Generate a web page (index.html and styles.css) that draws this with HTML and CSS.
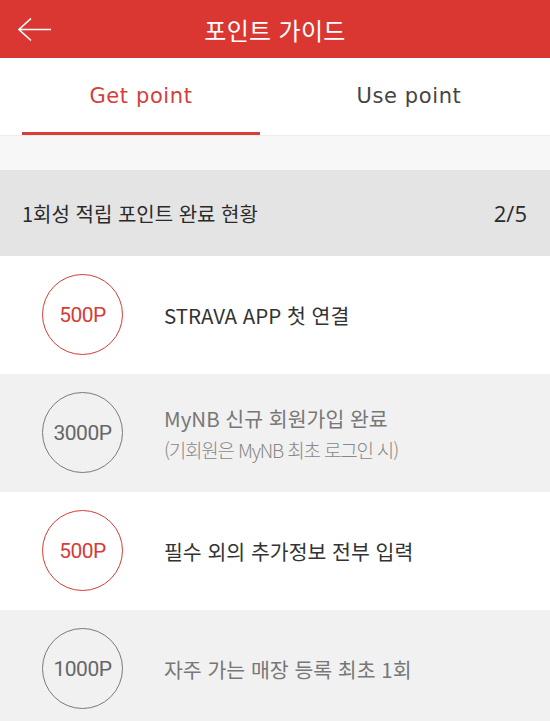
FILE: index.html
```html
<!DOCTYPE html>
<html lang="ko">
<head>
    <meta charset="UTF-8">
    <meta name="viewport" content="width=device-width, initial-scale=1.0">
    <title>포인트 가이드</title>
    <link rel="stylesheet" href="styles.css">
</head>
<body>
    <header class="topbar">
        <a class="back" href="#">
            <svg width="34" height="24" viewBox="0 0 34 24">
                <path d="M1 11.5 H33 M13 0.5 L1 11.5 L13 22.5" fill="none" stroke="#fff" stroke-width="1.6"/>
            </svg>
        </a>
        <h1>포인트 가이드</h1>
        <span></span>
    </header>

    <nav class="tabs">
        <a class="tab active" href="#">Get point</a>
        <a class="tab" href="#">Use point</a>
    </nav>

    <div class="spacer"></div>

    <div class="summary">
        <span>1회성 적립 포인트 완료 현황</span>
        <span class="count">2/5</span>
    </div>

    <ul class="list">
        <li class="item done">
            <div class="badge">500P</div>
            <div class="desc">
                <p class="title">STRAVA APP 첫 연결</p>
            </div>
        </li>
        <li class="item">
            <div class="badge">3000P</div>
            <div class="desc">
                <p class="title">MyNB 신규 회원가입 완료</p>
                <p class="note">(기회원은 MyNB 최초 로그인 시)</p>
            </div>
        </li>
        <li class="item done">
            <div class="badge">500P</div>
            <div class="desc">
                <p class="title">필수 외의 추가정보 전부 입력</p>
            </div>
        </li>
        <li class="item">
            <div class="badge">1000P</div>
            <div class="desc">
                <p class="title">자주 가는 매장 등록 최초 1회</p>
            </div>
        </li>
    </ul>
</body>
</html>
```

FILE: styles.css
```css
body {
    margin: 0;
    font-family: "Noto Sans CJK KR", "Noto Sans", sans-serif;
    color: #333;
    background-color: #fff;
}

.topbar {
    display: grid;
    grid-template-columns: 64px 1fr 64px;
    align-items: center;
    height: 58px;
    background-color: #da3733;
}

.back {
    display: flex;
    padding: 2px 0 0 18px;
}

.topbar h1 {
    margin: 0;
    text-align: center;
    color: #fff;
    font-size: 24px;
    font-weight: 400;
    letter-spacing: 0.3px;
}

.tabs {
    display: flex;
    justify-content: space-between;
    padding: 0 22px;
    height: 77px;
    border-bottom: 1px solid #ececec;
}

.tab {
    width: 238px;
    display: flex;
    align-items: center;
    justify-content: center;
    padding-top: 1px;
    box-sizing: border-box;
    font-family: "DejaVu Sans", sans-serif;
    font-size: 21px;
    letter-spacing: 0.6px;
    color: #444;
    text-decoration: none;
    border-bottom: 3px solid transparent;
}

.tab.active {
    color: #d5403b;
    border-bottom-color: #d5403b;
}

.spacer {
    height: 34px;
    background-color: #f7f7f7;
}

.summary {
    display: flex;
    justify-content: space-between;
    align-items: center;
    height: 86px;
    padding: 0 23px 0 22px;
    background-color: #e4e4e4;
    font-size: 20px;
    color: #2a2a2a;
}

.count {
    font-family: "Open Sans", sans-serif;
    font-size: 22px;
}

.list {
    list-style: none;
    margin: 0;
    padding: 0;
}

.item {
    display: flex;
    align-items: center;
    gap: 41px;
    padding: 18px 22px 19px 42px;
    background-color: #f1f1f1;
}

.item.done {
    background-color: #fff;
}

.badge {
    flex: none;
    width: 79px;
    height: 79px;
    border: 1.5px solid #7a7a7a;
    border-radius: 50%;
    display: flex;
    align-items: center;
    justify-content: center;
    font-family: "Roboto", sans-serif;
    font-size: 21px;
    letter-spacing: -0.5px;
    color: #666;
}

.done .badge {
    border-color: #d43d38;
    color: #d43d38;
}

.desc p {
    margin: 0;
}

.title {
    font-size: 20.5px;
    color: #777;
}

.done .title {
    color: #333;
}

.note {
    margin-top: 3px !important;
    font-size: 19px;
    font-weight: 300;
    letter-spacing: -1.2px;
    color: #888;
}
```
